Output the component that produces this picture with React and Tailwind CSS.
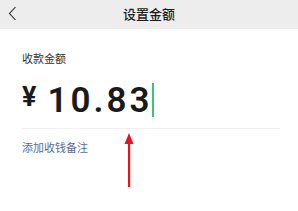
import React from 'react';

export default function App() {
  return (
    <div className="w-[298px] h-[211px] bg-white overflow-hidden relative" style={{ fontFamily: 'Roboto, "Noto Sans CJK SC", sans-serif' }}>
      {/* Header */}
      <div className="h-[29px] bg-[#ededed] flex items-center relative">
        <svg className="absolute left-[8px] top-[6px]" width="9" height="15" viewBox="0 0 9 15">
          <path d="M7.5 1 L1.5 7.5 L7.5 14" fill="none" stroke="#222" strokeWidth="1.1" />
        </svg>
        <div className="w-full text-center text-[13px] font-medium text-[#1a1a1a]">设置金额</div>
      </div>

      <div className="px-[22px]">
        <div className="mt-[24px] text-[11px] leading-[14px] text-[#333]">收款金额</div>

        <div className="mt-[13px] flex items-start h-[40px]">
          <span className="mt-[4px] text-[27px] font-bold leading-none text-[#1a1a1a]">¥</span>
          <span className="mt-[3px] ml-[11px] text-[35px] font-semibold leading-none tracking-[3px] text-[#1a1a1a]">10.83</span>
          <span className="mt-[3px] w-[2px] h-[34px] bg-[#3dc27a]"></span>
        </div>

        <div className="mt-[8px] h-px w-[258px] bg-[#f0f0f0]"></div>

        <div className="mt-[13px] text-[11px] leading-[14px] text-[#576b95]">添加收钱备注</div>
      </div>

      {/* Red arrow annotation */}
      <svg className="absolute left-[124px] top-[133px]" width="10" height="54" viewBox="0 0 10 54">
        <path d="M5 0 L9.5 11 L0.5 11 Z" fill="#e8141c" />
        <rect x="4" y="10" width="2.2" height="44" fill="#e8141c" />
      </svg>
    </div>
  );
}
